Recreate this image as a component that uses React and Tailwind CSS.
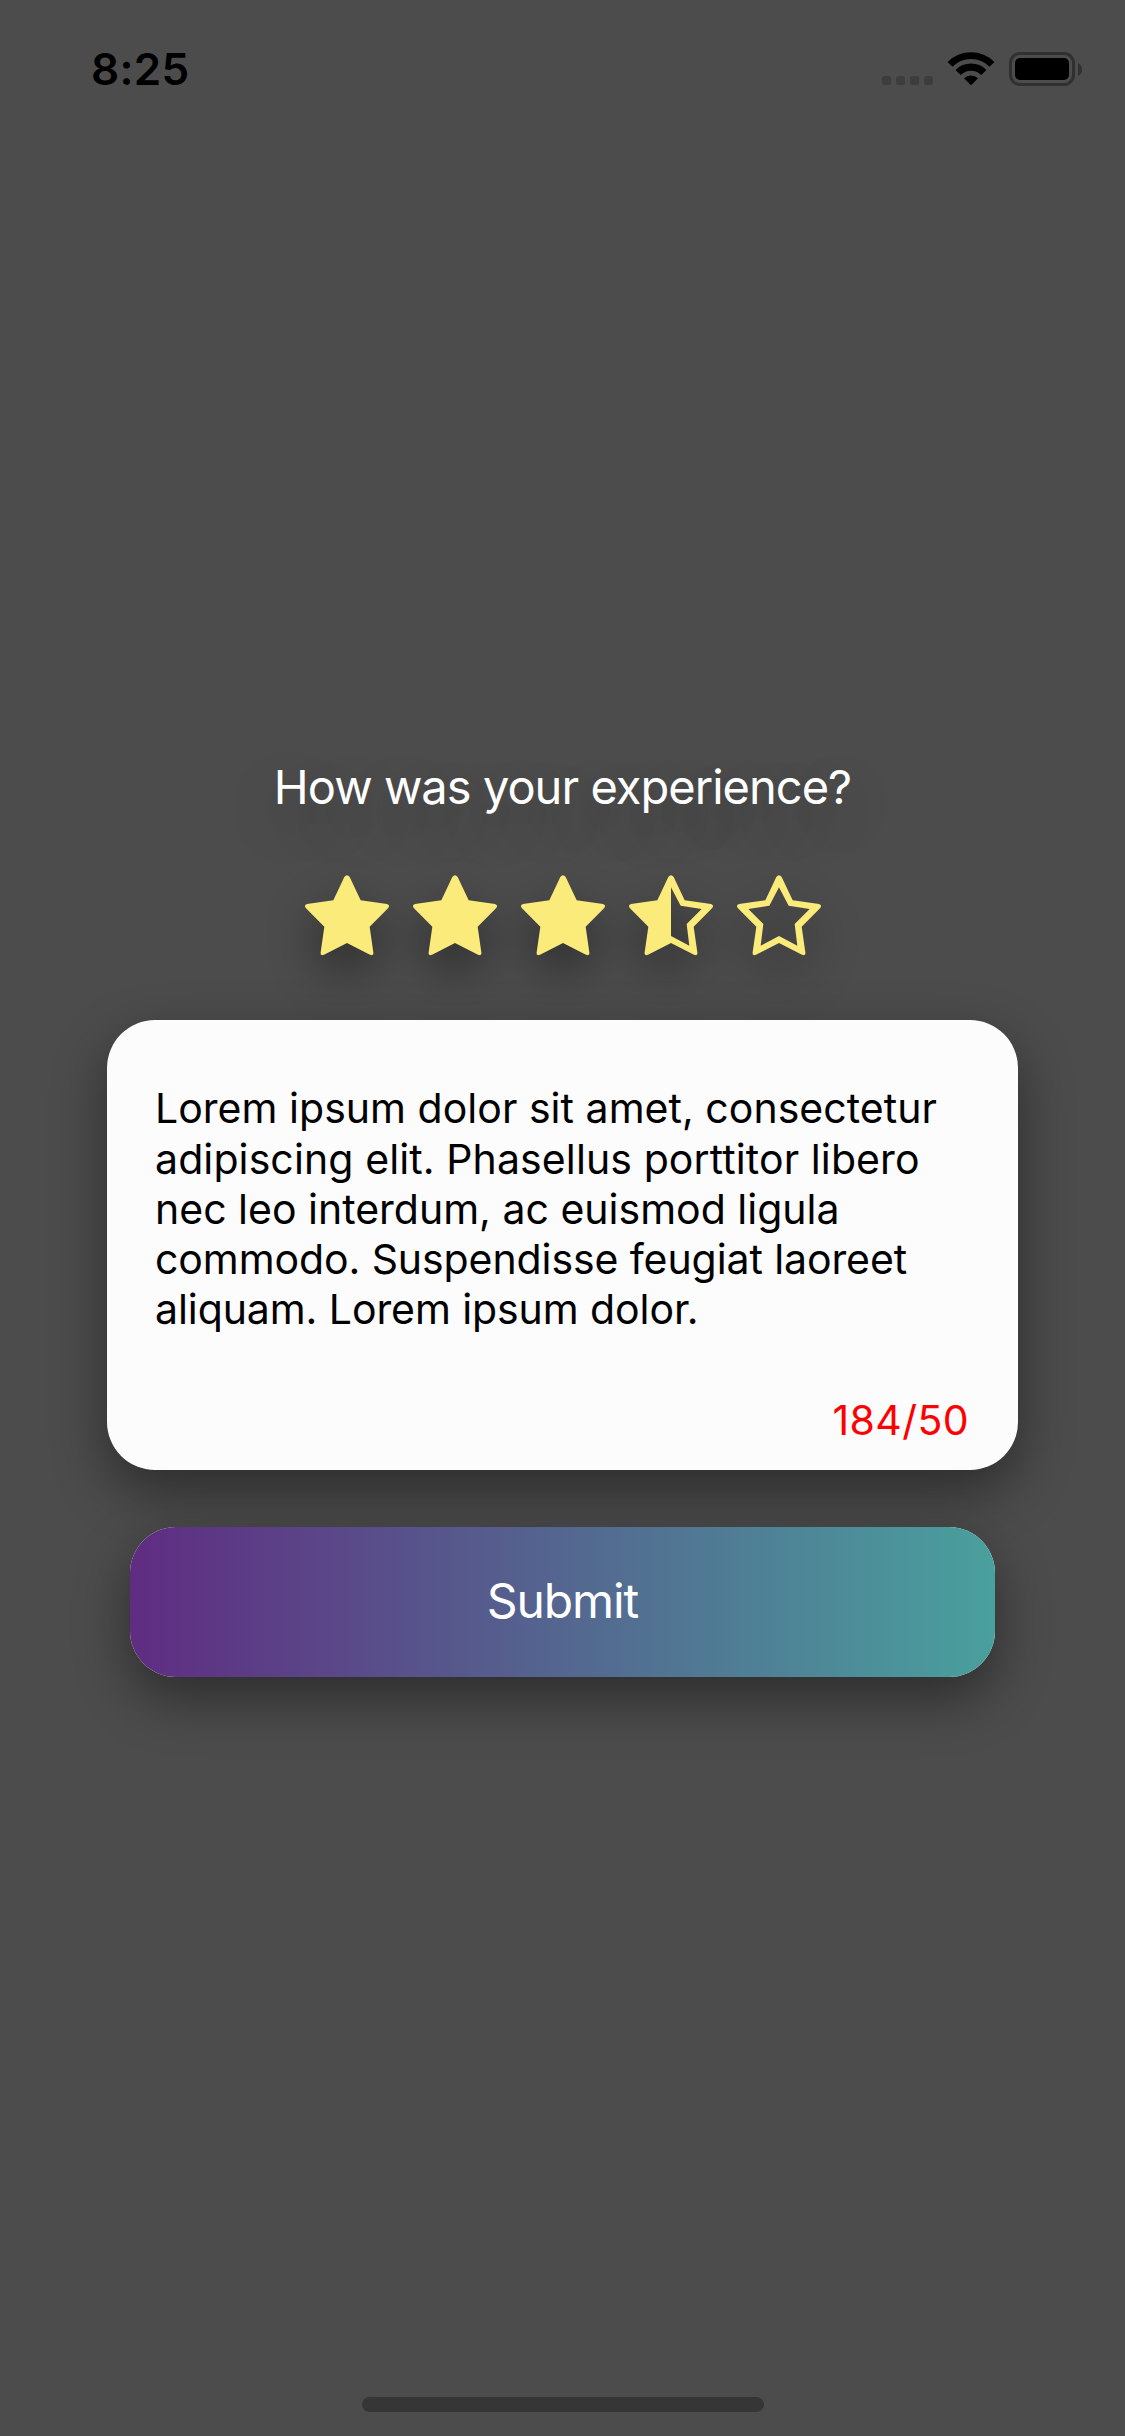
import React from "react";

const STAR =
  "M118 6Q126 -5 134 6L167 76L246 87Q257 91 249 100L194 155L205 232Q207 244 195 239L126 204L57 239Q45 244 47 232L58 155L3 100Q-5 91 6 87L85 76Z";
const HOLE =
  "M126 37L155 92L218 102L173 147L181 212L126 183L71 212L79 147L34 102L97 92Z";
const HALF_HOLE = "M126 37L155 92L218 102L173 147L181 212L126 183Z";

const CUTOUTS = { full: "", half: HALF_HOLE, empty: HOLE };

function Star({ kind }) {
  return (
    <svg className="h-[80px] w-[84px] overflow-visible" viewBox="0 0 252 240" fill="#faeb7b">
      <path fillRule="evenodd" d={STAR + CUTOUTS[kind]} />
    </svg>
  );
}

function WifiIcon() {
  return (
    <svg className="ml-[14px] h-[34px] w-[48px]" viewBox="0 0 144 102" fill="none">
      <path d="M9.1 37.1A89 89 0 0 1 134.9 37.1" stroke="#000" strokeWidth="20.5" />
      <path d="M33.5 61.5A54.5 54.5 0 0 1 110.5 61.5" stroke="#000" strokeWidth="22" />
      <path d="M51 79A29.7 29.7 0 0 1 93 79L72 100Z" fill="#000" />
    </svg>
  );
}

function BatteryIcon() {
  return (
    <div className="ml-[14px] flex items-center">
      <div className="flex h-[34px] w-[66px] rounded-[11px] border-3 border-[#303030] p-[3px]">
        <div className="flex-1 rounded-[5px] bg-black" />
      </div>
      <svg className="ml-[3px] h-[13px] w-[4px]" viewBox="0 0 4 13">
        <path d="M0 0Q4 2 4 6.5T0 13Z" fill="#303030" />
      </svg>
    </div>
  );
}

function StatusBar() {
  return (
    <header className="flex h-[138px] items-start justify-between pl-[91px] pr-[43px] pt-[43px]">
      <time className="text-[44px] font-semibold leading-[53px] tracking-[0.33px] text-black">8:25</time>
      <div className="mt-[9px] flex h-[34px]">
        <div className="flex items-end gap-[5px] pb-px">
          {[0, 1, 2, 3].map((i) => (
            <span key={i} className="size-[9px] rounded-[2.5px] bg-[#3d3d3d]" />
          ))}
        </div>
        <WifiIcon />
        <BatteryIcon />
      </div>
    </header>
  );
}

const STARS = ["full", "full", "full", "half", "empty"];

export default function App() {
  return (
    <div className="flex h-[2436px] w-[1125px] flex-col overflow-hidden bg-[#4c4c4c] font-['Inter','Liberation_Sans',sans-serif]">
      <StatusBar />
      <main className="flex flex-1 flex-col items-center pt-[619px]">
        <h1 className="whitespace-nowrap text-[47px] leading-[60px] tracking-[-0.97px] text-white [text-shadow:0_21px_54px_rgba(0,0,0,0.3)]">
          How was your experience?
        </h1>
        <div className="mt-[58px] flex gap-[24px] drop-shadow-[0_21px_23px_rgba(0,0,0,0.4)]">
          {STARS.map((kind, i) => (
            <Star key={i} kind={kind} />
          ))}
        </div>
        <section className="relative mt-[65px] flex h-[450px] w-[911px] flex-col justify-between rounded-[48px] bg-[#fcfcfc] pb-[23px] pl-[48px] pr-[49px] pt-[63.3px] text-[41px] shadow-[0_21px_54px_rgba(0,0,0,0.42)]">
          <p className="whitespace-nowrap leading-[50.2px] text-black">
            <span className="block tracking-[0.03px]">Lorem ipsum dolor sit amet, consectetur</span>
            <span className="block tracking-[0.107px]">adipiscing elit. Phasellus porttitor libero</span>
            <span className="block">nec leo interdum, ac euismod ligula</span>
            <span className="block tracking-[-0.09px]">commodo. Suspendisse feugiat laoreet</span>
            <span className="block tracking-[-0.08px]">aliquam. Lorem ipsum dolor.</span>
          </p>
          <p className="text-right leading-[54px] tracking-[0.4px] text-[#ff0000]">184/50</p>
        </section>
        <button className="relative mt-[57px] h-[150px] w-[865px] rounded-[46px] bg-white text-[48px] text-white shadow-[0_21px_54px_rgba(0,0,0,0.42)]">
          <span className="flex h-full items-center justify-center rounded-[46px] bg-linear-to-r/srgb from-[#5f2c82] to-[#49a09d] pb-[2px] tracking-[-1.08px]">
            Submit
          </span>
        </button>
      </main>
      <footer className="flex h-[39px] shrink-0 justify-center">
        <div className="h-[15px] w-[402px] rounded-full bg-[#363636]" />
      </footer>
    </div>
  );
}
